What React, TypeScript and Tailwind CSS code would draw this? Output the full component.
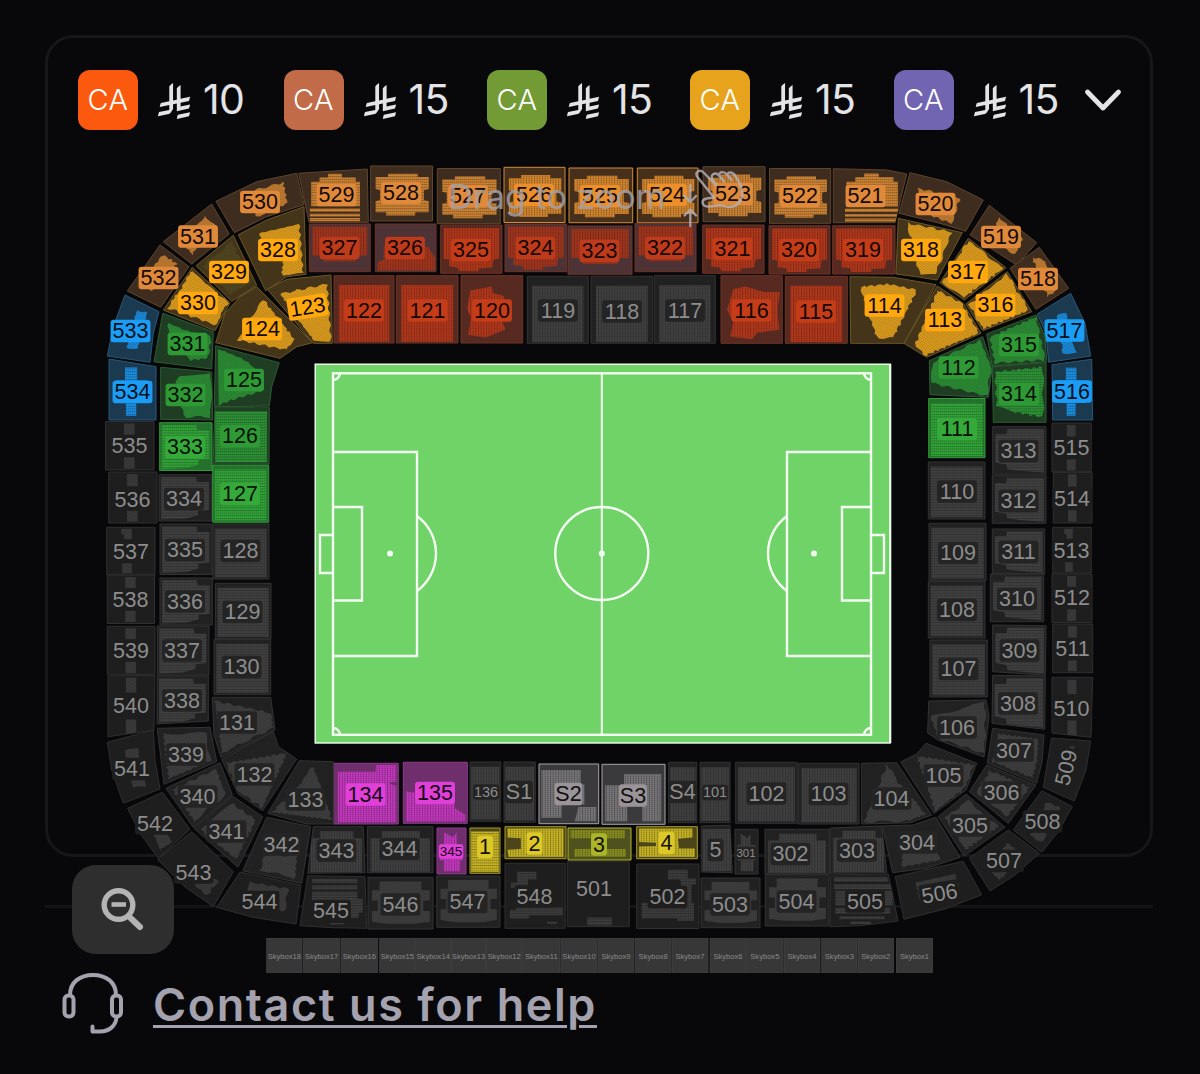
import React from "react";
import clsx from "clsx";

type Kind =
  | "orange"
  | "orangeLit"
  | "gold"
  | "goldDim"
  | "red"
  | "redDim"
  | "green"
  | "greenLit"
  | "blue"
  | "grey"
  | "greyDark"
  | "magenta"
  | "silver"
  | "yellow"
  | "olive";

type Section = {
  id: string;
  at: [number, number];
  kind: Kind;
  // four numbers are a box (x1, y1, x2, y2), more are a polygon
  shape: number[];
  // name of a preset or a polygon of its own
  seats?: string | number[];
  rows?: "v" | "h" | "d";
  size?: number;
  rotate?: number;
};

const KINDS: Record<Kind, { area: string; seats: string; tag: string; text: string }> = {
  orange: { area: "fill-[#3e2c1e] stroke-[#5f452d]", seats: "fill-[#d08636]", tag: "fill-[#e0893a]", text: "fill-[#120b05]" },
  orangeLit: { area: "fill-[#46301c] stroke-[#d18a35]", seats: "fill-[#d98a30]", tag: "fill-[#ec8f2a]", text: "fill-[#120b05]" },
  gold: { area: "fill-[#43341a] stroke-[#6b5726]", seats: "fill-[#eda820]", tag: "fill-[#ffa80f]", text: "fill-[#120b05]" },
  goldDim: { area: "fill-[#43351a] stroke-[#6b5726]", seats: "fill-[#564b24]", tag: "fill-[#ffa80f]", text: "fill-[#120b05]" },
  red: { area: "fill-[#572a21] stroke-[#703324]", seats: "fill-[#b83a1d]", tag: "fill-[#c43c18]", text: "fill-[#150705]" },
  redDim: { area: "fill-[#4e3336] stroke-[#703324]", seats: "fill-[#a8381f]", tag: "fill-[#bd3a1b]", text: "fill-[#150705]" },
  green: { area: "fill-[#1f3d23] stroke-[#2d5a33]", seats: "fill-[#2f9638]", tag: "fill-[#2f9a35]", text: "fill-[#051206]" },
  greenLit: { area: "fill-[#25702c] stroke-[#2f9a38]", seats: "fill-[#34a83b]", tag: "fill-[#35a939]", text: "fill-[#051206]" },
  blue: { area: "fill-[#1b3a50] stroke-[#28577a]", seats: "fill-[#1d92e6]", tag: "fill-[#1b9df5]", text: "fill-[#04101a]" },
  grey: { area: "fill-[#212121] stroke-[#333333]", seats: "fill-[#434343]", tag: "fill-[#242424]", text: "fill-[#8d8d8d]" },
  greyDark: { area: "fill-[#1e1e1e] stroke-[#2f2f2f]", seats: "fill-[#3f3f3f]", tag: "fill-[#1e1e1e]", text: "fill-[#8d8d8d]" },
  magenta: { area: "fill-[#6e2f6c] stroke-[#8c3b8a]", seats: "fill-[#c93bc3]", tag: "fill-[#e03fd8]", text: "fill-[#140413]" },
  silver: { area: "fill-[#3a393b] stroke-[#a6a4a6]", seats: "fill-[#7b797b]", tag: "fill-[#9a9498]", text: "fill-[#101010]" },
  yellow: { area: "fill-[#4c451b] stroke-[#a99a26]", seats: "fill-[#cbb926]", tag: "fill-[#dcc829]", text: "fill-[#141204]" },
  olive: { area: "fill-[#4e521e] stroke-[#b5b62a]", seats: "fill-[#8d9122]", tag: "fill-[#aab528]", text: "fill-[#141204]" },
};

// Seat blocks in the unit square, stretched over the section's box
const PRESETS: Record<string, number[][]> = {
  full: [[0.04, 0.08, 0.96, 0.08, 0.96, 0.97, 0.04, 0.97]],
  inner: [[0.08, 0.14, 0.92, 0.14, 0.92, 0.98, 0.08, 0.98]],
  barrel: [[0.08, 0.2, 0.28, 0.2, 0.28, 0.14, 0.76, 0.14, 0.76, 0.2, 0.94, 0.2, 0.94, 0.42, 0.86, 0.44, 0.86, 0.62, 0.94, 0.64, 0.94, 0.84, 0.72, 0.84, 0.72, 0.9, 0.25, 0.9, 0.25, 0.84, 0.08, 0.84, 0.08, 0.64, 0.15, 0.62, 0.15, 0.44, 0.08, 0.42]],
  steps: [
    [0.42, 0.09, 0.62, 0.09, 0.62, 0.16, 0.82, 0.16, 0.82, 0.24, 0.88, 0.24, 0.88, 0.7, 0.18, 0.7, 0.18, 0.24, 0.3, 0.24, 0.3, 0.16, 0.42, 0.16],
    [0.16, 0.74, 0.88, 0.74, 0.88, 0.8, 0.16, 0.8],
    [0.16, 0.84, 0.88, 0.84, 0.88, 0.89, 0.16, 0.89],
    [0.16, 0.92, 0.88, 0.92, 0.88, 0.98, 0.16, 0.98],
  ],
  bowl: [[0.05, 0.06, 0.95, 0.06, 0.95, 0.7, 0.86, 0.72, 0.84, 0.88, 0.62, 0.9, 0.62, 0.96, 0.3, 0.96, 0.28, 0.88, 0.14, 0.86, 0.14, 0.72, 0.05, 0.7]],
  top: [[0.05, 0.06, 0.95, 0.06, 0.95, 0.66, 0.8, 0.66, 0.76, 0.78, 0.24, 0.78, 0.2, 0.66, 0.05, 0.66]],
  base: [[0.14, 0.45, 0.6, 0.5, 0.7, 0.42, 0.88, 0.5, 0.98, 0.7, 0.98, 0.97, 0.04, 0.97, 0.04, 0.8, 0.14, 0.75]],
  blob: [[0.2, 0.2, 0.4, 0.16, 0.7, 0.24, 0.96, 0.24, 0.92, 0.5, 0.95, 0.8, 0.6, 0.84, 0.5, 0.94, 0.15, 0.9, 0.2, 0.7, 0.1, 0.5]],
  blob2: [[0.15, 0.22, 0.5, 0.16, 0.52, 0.26, 0.7, 0.3, 0.66, 0.66, 0.72, 0.8, 0.4, 0.92, 0.12, 0.88, 0.16, 0.62, 0.1, 0.5]],
  left: [[0.04, 0.05, 0.7, 0.05, 0.72, 0.16, 0.95, 0.16, 0.95, 0.76, 0.74, 0.78, 0.74, 0.88, 0.5, 0.95, 0.04, 0.97]],
  right: [[0.96, 0.05, 0.28, 0.05, 0.26, 0.16, 0.05, 0.16, 0.05, 0.76, 0.26, 0.8, 0.28, 0.9, 0.5, 0.93, 0.96, 0.97]],
  bars: [[0.38, 0.04, 0.6, 0.04, 0.6, 0.28, 0.38, 0.28], [0.38, 0.72, 0.6, 0.72, 0.6, 0.97, 0.38, 0.97]],
  bars2: [[0.3, 0.03, 0.52, 0.03, 0.52, 0.25, 0.36, 0.25, 0.36, 0.15, 0.3, 0.15], [0.32, 0.76, 0.52, 0.76, 0.52, 0.97, 0.32, 0.97]],
  plus: [[0.34, 0.14, 0.6, 0.14, 0.6, 0.35, 0.82, 0.35, 0.82, 0.72, 0.58, 0.72, 0.58, 0.93, 0.36, 0.93, 0.36, 0.72, 0.14, 0.72, 0.14, 0.35, 0.34, 0.35]],
  fringe: [[0.22, 0.1, 0.8, 0.1, 0.8, 0.25, 0.95, 0.25, 0.95, 0.98, 0.05, 0.98, 0.05, 0.25, 0.22, 0.25]],
  slats: [
    [0.06, 0.06, 0.85, 0.06, 0.85, 0.15, 0.06, 0.15],
    [0.06, 0.19, 0.9, 0.19, 0.9, 0.29, 0.06, 0.29],
    [0.08, 0.32, 0.92, 0.32, 0.92, 0.6, 0.08, 0.6],
    [0.08, 0.64, 0.88, 0.64, 0.88, 0.76, 0.08, 0.76],
    [0.14, 0.8, 0.8, 0.8, 0.8, 0.86, 0.14, 0.86],
    [0.3, 0.9, 0.6, 0.9, 0.6, 0.95, 0.3, 0.95],
  ],
  pillow: [[0.18, 0.08, 0.82, 0.08, 0.82, 0.25, 0.95, 0.25, 0.95, 0.45, 0.85, 0.45, 0.85, 0.65, 0.95, 0.65, 0.95, 0.86, 0.72, 0.9, 0.3, 0.9, 0.06, 0.86, 0.06, 0.65, 0.15, 0.65, 0.15, 0.45, 0.06, 0.45, 0.06, 0.25, 0.18, 0.25]],
  stair: [[0.2, 0.13, 0.52, 0.13, 0.52, 0.25, 0.38, 0.25, 0.38, 0.38, 0.1, 0.38, 0.1, 0.3, 0.2, 0.3], [0.18, 0.58, 0.8, 0.58, 0.8, 0.68, 0.96, 0.68, 0.96, 0.8, 0.4, 0.8, 0.4, 0.85, 0.08, 0.85, 0.08, 0.72, 0.18, 0.72], [0.7, 0.9, 0.86, 0.9, 0.86, 0.93, 0.7, 0.93]],
  stairR: [[0.5, 0.09, 0.82, 0.09, 0.82, 0.22, 0.95, 0.22, 0.95, 0.32, 0.88, 0.32, 0.88, 0.6, 0.76, 0.6, 0.7, 0.24, 0.5, 0.24], [0.08, 0.6, 0.92, 0.6, 0.92, 0.88, 0.65, 0.88, 0.65, 0.84, 0.08, 0.84]],
  foot: [[0.32, 0.86, 0.72, 0.86, 0.72, 0.98, 0.32, 0.98]],
  ladder: [
    [0.18, 0.06, 0.86, 0.06, 0.86, 0.14, 0.18, 0.14],
    [0.18, 0.18, 0.86, 0.18, 0.86, 0.26, 0.18, 0.26],
    [0.18, 0.3, 0.86, 0.3, 0.86, 0.44, 0.94, 0.44, 0.94, 0.7, 0.88, 0.7, 0.88, 0.8, 0.7, 0.8, 0.7, 0.48, 0.18, 0.48],
    [0.45, 0.9, 0.66, 0.9, 0.66, 0.93, 0.45, 0.93],
  ],
  cross: [[0.25, 0.1, 0.55, 0.2, 0.68, 0.1, 0.68, 0.35, 0.9, 0.35, 0.9, 0.7, 0.8, 0.7, 0.8, 0.94, 0.25, 0.94, 0.25, 0.7, 0.1, 0.7, 0.1, 0.35, 0.25, 0.35]],
  bites: [[0.04, 0.06, 0.96, 0.06, 0.96, 0.95, 0.06, 0.95, 0.04, 0.72, 0.26, 0.7, 0.26, 0.36, 0.04, 0.34]],
  bites2: [[0.04, 0.06, 0.92, 0.06, 0.92, 0.34, 0.68, 0.38, 0.7, 0.68, 0.96, 0.68, 0.96, 0.95, 0.04, 0.95, 0.04, 0.62, 0.32, 0.6, 0.32, 0.5, 0.04, 0.48]],
  band: [[0.04, 0.06, 0.9, 0.06, 0.9, 0.32, 0.04, 0.32], [0.1, 0.66, 0.92, 0.66, 0.92, 0.9, 0.1, 0.9]],
  s2: [[0.04, 0.1, 0.7, 0.1, 0.7, 0.34, 0.76, 0.34, 0.76, 0.68, 0.38, 0.68, 0.38, 0.9, 0.04, 0.9], [0.66, 0.72, 0.96, 0.72, 0.96, 0.96, 0.6, 0.96]],
  s3: [[0.35, 0.16, 0.94, 0.16, 0.94, 0.95, 0.64, 0.95, 0.64, 0.7, 0.4, 0.7, 0.4, 0.95, 0.05, 0.95, 0.05, 0.35, 0.35, 0.35]],
  m134: [[0.07, 0.14, 0.65, 0.14, 0.66, 0.03, 0.97, 0.03, 0.97, 0.3, 0.85, 0.32, 0.97, 0.38, 0.97, 0.97, 0.07, 0.97]],
  m135: [[0.04, 0.48, 0.2, 0.5, 0.8, 0.5, 0.8, 0.75, 0.97, 0.86, 0.97, 0.97, 0.04, 0.97]],
};

const SECTIONS: Section[] = [
  // upper ring, top
  { id: "530", at: [260, 202], kind: "orange", shape: [216, 201.3, 256.7, 181.7, 296.7, 173.3, 304, 204.7, 266.7, 216.7, 234.3, 232.7], seats: [247, 193, 283, 182, 287, 203, 257, 217] },
  { id: "529", at: [336.5, 195], kind: "orange", shape: [298.7, 173.3, 367.3, 169, 368.3, 222.3, 309, 222.3], seats: "steps", rows: "h" },
  { id: "528", at: [401, 193], kind: "orange", shape: [370.7, 166, 432.5, 221], seats: "barrel", rows: "h" },
  { id: "527", at: [468, 196], kind: "orange", shape: [437.3, 168.5, 500.3, 223.7], seats: "barrel", rows: "h" },
  { id: "526", at: [534, 195], kind: "orangeLit", shape: [504, 167.3, 565, 222.5], seats: "barrel", rows: "v" },
  { id: "525", at: [600, 196], kind: "orangeLit", shape: [569, 168, 632.7, 222.7], seats: "barrel", rows: "v" },
  { id: "524", at: [667, 195], kind: "orangeLit", shape: [637.3, 168, 698, 222.7], seats: "barrel", rows: "v" },
  { id: "523", at: [733, 194], kind: "orange", shape: [703, 166.7, 765, 221.7], seats: "barrel", rows: "v" },
  { id: "522", at: [800, 196], kind: "orange", shape: [769.5, 168.5, 830.7, 223.3], seats: "barrel", rows: "h" },
  { id: "521", at: [865.5, 196], kind: "orange", shape: [833.3, 168.7, 886.7, 170, 906.7, 174, 895, 222.7, 833.3, 222.7], seats: "steps", rows: "h" },
  { id: "520", at: [935.5, 204], kind: "orange", shape: [910, 172.7, 946.7, 181.7, 983.3, 200, 965.7, 231.3, 940, 223.3, 899, 213.3], seats: [917, 188, 960, 198, 952, 223, 923, 213] },
  { id: "519", at: [1001, 237], kind: "orange", shape: [989.3, 205.3, 1036.7, 242.7, 1016.7, 265, 970, 235], seats: [998, 218, 1023, 238, 1015, 255, 993, 242] },
  { id: "518", at: [1038, 279], kind: "orange", shape: [1039.3, 247.3, 1068.7, 288.3, 1036, 309.3, 1010, 268.3], seats: [1032, 257, 1043, 260, 1057, 290, 1048, 297] },
  { id: "517", at: [1064.5, 330.5], kind: "blue", shape: [1070.7, 293.3, 1085, 323.3, 1090.7, 356, 1048.7, 362.3, 1046, 333.3, 1037.3, 314], seats: [1056, 317, 1065, 312, 1076, 353, 1063, 353] },
  { id: "516", at: [1072, 391.5], kind: "blue", shape: [1052, 364.7, 1091.7, 359.3, 1092.7, 420, 1052.7, 420], seats: "plus", rows: "h" },
  // upper ring, right side
  { id: "515", at: [1071.5, 448], kind: "greyDark", shape: [1052, 423, 1091.3, 472], seats: "bars" },
  { id: "514", at: [1072, 499], kind: "greyDark", shape: [1053.3, 472.3, 1092, 523], seats: "bars" },
  { id: "513", at: [1071.5, 551], kind: "greyDark", shape: [1052.7, 527.3, 1091.3, 573], seats: "bars2" },
  { id: "512", at: [1072, 598], kind: "greyDark", shape: [1052, 574, 1092, 622.5], seats: "bars" },
  { id: "511", at: [1072.5, 649], kind: "greyDark", shape: [1052.7, 624, 1092.7, 672.7], seats: "bars" },
  { id: "510", at: [1071.5, 708.5], kind: "greyDark", shape: [1052, 677.3, 1092.7, 677.3, 1091, 737.3, 1052, 733], seats: "bars" },
  { id: "509", at: [1066, 767.5], kind: "greyDark", shape: [1051.5, 738, 1090.7, 741, 1086, 770, 1074.3, 801, 1043.3, 787.3], seats: [1064, 748, 1076, 746, 1070, 780, 1060, 778], rotate: -76 },
  { id: "508", at: [1042.5, 821.5], kind: "greyDark", shape: [1041.7, 790.7, 1072.3, 806.7, 1058, 832, 1041.7, 852.3, 1013.3, 830], seats: [1047, 802, 1060, 808, 1042, 842, 1030, 836] },
  { id: "507", at: [1004, 861], kind: "greyDark", shape: [1008.3, 830, 1039.3, 853.3, 1015, 875, 990, 891, 969.3, 858.3], seats: [1008, 842, 1022, 855, 1000, 880, 988, 868] },
  { id: "506", at: [939.5, 893.5], kind: "greyDark", shape: [963.3, 861.3, 981.7, 894.7, 945, 909, 904, 919.3, 895.3, 876.7], seats: [916, 883, 955, 873, 960, 890, 920, 900], rotate: -10 },
  // upper ring, bottom
  { id: "505", at: [865, 901.5], kind: "greyDark", shape: [830.7, 875, 888.3, 874, 898, 921, 860, 925.7, 830, 926.7], seats: "slats", rows: "h" },
  { id: "504", at: [796.5, 901.5], kind: "grey", shape: [765.3, 874.3, 829, 926], seats: "pillow" },
  { id: "503", at: [730, 904.5], kind: "grey", shape: [701, 878, 760, 927.7], seats: "pillow" },
  { id: "502", at: [667.5, 897], kind: "greyDark", shape: [636.7, 864, 699, 928.5], seats: "stairR", rows: "h" },
  { id: "501", at: [594, 888.5], kind: "greyDark", shape: [567.3, 861.7, 629.3, 926.7], seats: "foot", rows: "h" },
  { id: "548", at: [534.5, 896.5], kind: "greyDark", shape: [505, 863.3, 565.3, 928.3], seats: "stair", rows: "h" },
  { id: "547", at: [467.5, 902], kind: "grey", shape: [436.7, 876, 500, 927.3], seats: "pillow" },
  { id: "546", at: [400.5, 904.5], kind: "grey", shape: [368, 877.3, 433, 929], seats: "pillow" },
  { id: "545", at: [331, 911], kind: "greyDark", shape: [307.7, 875.7, 365, 876.7, 366.7, 928.3, 333, 927.7, 300, 925.7], seats: "ladder", rows: "h" },
  { id: "544", at: [259.5, 902], kind: "greyDark", shape: [240, 872, 301, 885, 296, 924, 253, 917.3, 216.7, 907.3], seats: [250, 882, 288, 889, 285, 911, 270, 908, 248, 892] },
  { id: "543", at: [193.5, 872.5], kind: "greyDark", shape: [191.7, 831.7, 233.3, 871.7, 213.3, 906.7, 183.3, 885.7, 157.3, 859.3], seats: [188, 862, 218, 882, 206, 896, 195, 884] },
  { id: "542", at: [155, 823.5], kind: "greyDark", shape: [162.3, 792.3, 190, 829.3, 158.3, 858.3, 140, 833.3, 127.7, 808.3], seats: [146, 812, 158, 812, 172, 842, 160, 850] },
  { id: "541", at: [132, 769], kind: "greyDark", shape: [153.3, 730, 155, 760, 160, 789, 123.3, 803.3, 111.7, 770, 107.3, 742.3], seats: [125, 750, 138, 748, 147, 785, 134, 788] },
  // upper ring, left side
  { id: "540", at: [131, 705.5], kind: "greyDark", shape: [108, 676, 155, 675.3, 154, 730, 108, 736.7], seats: "bars" },
  { id: "539", at: [131, 650.5], kind: "greyDark", shape: [107.3, 626.3, 155, 674.7], seats: "bars" },
  { id: "538", at: [130.5, 599.5], kind: "greyDark", shape: [107.3, 575, 154.5, 623.5], seats: "bars" },
  { id: "537", at: [131, 551.5], kind: "greyDark", shape: [106.7, 527.3, 155, 574.7], seats: "bars2" },
  { id: "536", at: [132.5, 499.5], kind: "greyDark", shape: [108.7, 472, 157, 523], seats: "bars" },
  { id: "535", at: [129.5, 446], kind: "greyDark", shape: [105.5, 421.5, 154, 470], seats: "bars" },
  { id: "534", at: [132.5, 392], kind: "blue", shape: [109, 359, 156, 366.7, 156, 420, 109, 420], seats: "plus", rows: "h" },
  { id: "533", at: [130.5, 331], kind: "blue", shape: [125, 295, 159, 311.7, 153.3, 333.3, 150, 362.3, 107.3, 356, 113.3, 326.7], seats: [137, 310, 147, 313, 137, 350, 127, 347] },
  { id: "532", at: [158.5, 278], kind: "orange", shape: [160, 245, 189, 266.7, 160.7, 307.3, 127.3, 291], seats: [163, 255, 177, 264, 151, 292, 141, 282] },
  { id: "531", at: [198, 236.5], kind: "orange", shape: [211.7, 204, 229.3, 234, 191.7, 264, 163.3, 241.7], seats: [205, 217, 217, 226, 192, 254, 181, 240] },

  // middle ring
  { id: "327", at: [339.5, 248], kind: "redDim", shape: [309.3, 224, 370.3, 271.7], seats: "top", rows: "v" },
  { id: "326", at: [405, 248], kind: "redDim", shape: [375.3, 224, 436, 271.7], seats: "base", rows: "v" },
  { id: "325", at: [471, 250], kind: "red", shape: [440.7, 225, 502, 273.3], seats: "bowl", rows: "v" },
  { id: "324", at: [535.5, 248], kind: "redDim", shape: [505, 224, 566.7, 271.7], seats: "bowl", rows: "v" },
  { id: "323", at: [599.5, 251], kind: "redDim", shape: [568, 226, 632, 274.3], seats: "top", rows: "v" },
  { id: "322", at: [665, 248], kind: "redDim", shape: [635, 223.3, 696, 271.7], seats: "top", rows: "v" },
  { id: "321", at: [732.5, 249], kind: "red", shape: [702.7, 225, 764, 273.3], seats: "bowl", rows: "v" },
  { id: "320", at: [799, 250], kind: "red", shape: [769, 225.7, 830, 274], seats: "bowl", rows: "v" },
  { id: "319", at: [863, 250], kind: "red", shape: [832.7, 225.7, 895, 274], seats: "bowl", rows: "v" },
  { id: "318", at: [921, 250], kind: "gold", shape: [898.3, 218.3, 962.3, 232.7, 937, 280, 916.7, 276.7, 896, 274], seats: [907, 223, 952, 232, 935, 275, 920, 275] },
  { id: "317", at: [968, 272], kind: "gold", shape: [968.3, 238.3, 1006, 267.7, 964.3, 300, 940, 282.7], seats: [968, 241, 1004, 268, 963, 298, 943, 282] },
  { id: "316", at: [995.5, 305], kind: "gold", shape: [1007.3, 271.7, 1031.7, 311.7, 982.7, 330.7, 966, 304], seats: [1007, 274, 1029, 310, 983, 329, 969, 305] },
  { id: "315", at: [1019, 345], kind: "green", shape: [986.7, 334, 1036, 315, 1045, 336.7, 1046.7, 361.7, 992.3, 366], seats: [990, 337, 1036, 317, 1045, 360, 995, 363] },
  { id: "314", at: [1019, 394], kind: "green", shape: [992.3, 366.7, 1046, 362.7, 1046, 422.3, 993.3, 422.3], seats: [995, 372, 1043, 367, 1043, 417, 1013, 412, 997, 407], rows: "h" },
  { id: "313", at: [1018.5, 451], kind: "grey", shape: [992.7, 426.7, 1046, 474], seats: "right", rows: "h" },
  { id: "312", at: [1018.5, 501], kind: "grey", shape: [992.3, 475.3, 1046, 523.3], seats: "right", rows: "h" },
  { id: "311", at: [1018.5, 552], kind: "grey", shape: [992.3, 529, 1044.7, 574], seats: "right", rows: "h" },
  { id: "310", at: [1017, 599], kind: "grey", shape: [990.3, 574, 1043.7, 621.7], seats: "right", rows: "h" },
  { id: "309", at: [1019.5, 650.5], kind: "grey", shape: [992.7, 625, 1046, 625.7, 1045.3, 675, 992.7, 671.7], seats: "right", rows: "h" },
  { id: "308", at: [1018, 703.5], kind: "grey", shape: [992.7, 675.3, 1045.3, 676, 1044.7, 729.3, 992, 723.3], seats: "right", rows: "h" },
  { id: "307", at: [1014, 750.5], kind: "grey", shape: [992.7, 728.3, 1044, 735, 1042, 762, 1036.7, 783.3, 987.3, 763.3] },
  { id: "306", at: [1001.5, 792.5], kind: "grey", shape: [969.3, 791.7, 986.7, 765, 1036, 785, 1008.3, 823.3] },
  { id: "305", at: [970, 825.5], kind: "grey", shape: [938.3, 816.7, 966, 794, 1005, 827.3, 964, 856] },
  { id: "304", at: [917, 842.5], kind: "grey", shape: [882.3, 826, 913.3, 825, 936, 817.3, 960, 857.3, 926.7, 868.3, 892.7, 872.7], seats: [903, 838, 932, 832, 940, 860, 902, 867] },
  { id: "303", at: [857, 850.5], kind: "grey", shape: [830, 828, 881.7, 826, 886.7, 872.7, 830, 873.3], seats: "fringe", rows: "v" },
  { id: "302", at: [790.5, 854], kind: "grey", shape: [765, 829.3, 829.3, 874], seats: "fringe", rows: "v" },
  { id: "301", at: [746, 853], kind: "grey", shape: [735, 829.3, 758, 874], seats: "cross", rows: "v", size: 11.5 },
  { id: "5", at: [715.5, 850], kind: "grey", shape: [701.3, 826, 730, 825.3, 732.3, 872.7, 701.3, 872], seats: "full", rows: "v" },
  { id: "4", at: [666.5, 843], kind: "yellow", shape: [636.7, 826.7, 697.3, 858.7], seats: "bites2", rows: "v" },
  { id: "3", at: [599, 844.5], kind: "olive", shape: [568, 828, 631, 860], seats: "band", rows: "v" },
  { id: "2", at: [534.5, 843.5], kind: "yellow", shape: [505, 826.7, 566, 858.7], seats: "bites", rows: "v" },
  { id: "1", at: [485, 847], kind: "yellow", shape: [470, 828, 500, 873.3], seats: "full", rows: "h" },
  { id: "345", at: [451, 851.5], kind: "magenta", shape: [437, 828, 466, 874], seats: "cross", rows: "v", size: 13.5 },
  { id: "344", at: [399.5, 849], kind: "grey", shape: [367.3, 826.7, 433, 872.7], seats: "fringe", rows: "v" },
  { id: "343", at: [336.5, 850.5], kind: "grey", shape: [313.3, 826.7, 363.3, 826.7, 365, 872.7, 307.7, 873.3], seats: "fringe", rows: "v" },
  { id: "342", at: [281.5, 844.5], kind: "grey", shape: [266.7, 817.3, 310.7, 826.7, 301.7, 883.3, 242.7, 870.7], seats: [265, 855, 297, 856, 295, 878, 260, 870] },
  { id: "341", at: [226.5, 831.5], kind: "grey", shape: [232.3, 796, 262.7, 816.7, 238, 867.3, 194, 828.3] },
  { id: "340", at: [197.5, 796.5], kind: "grey", shape: [220, 762.7, 232.3, 794.7, 193.3, 827.3, 166, 788.3] },
  { id: "339", at: [186, 754.5], kind: "grey", shape: [157.3, 728.3, 210, 727.3, 216.7, 761.7, 164, 784.3] },
  { id: "338", at: [182, 700.5], kind: "grey", shape: [157.3, 676, 208.3, 676, 208.3, 721, 157, 724], seats: "left", rows: "h" },
  { id: "337", at: [182, 650.5], kind: "grey", shape: [157.3, 626, 209, 675], seats: "left", rows: "h" },
  { id: "336", at: [185, 601.5], kind: "grey", shape: [160, 578, 212.3, 625], seats: "left", rows: "h" },
  { id: "335", at: [185, 550], kind: "grey", shape: [160, 524, 212, 574.5], seats: "left", rows: "h" },
  { id: "334", at: [184, 499], kind: "grey", shape: [159, 474.7, 211.7, 521], seats: "left", rows: "h" },
  { id: "333", at: [185, 447], kind: "greenLit", shape: [159.7, 422.7, 212, 470.5], seats: "left", rows: "h" },
  { id: "332", at: [185.5, 395], kind: "green", shape: [160.7, 367.3, 211.7, 372, 212.7, 420, 160.7, 419.3], seats: [180, 375, 211, 374, 211, 417, 185, 417, 180, 402, 168, 398] },
  { id: "331", at: [187.5, 344], kind: "green", shape: [162.7, 313.3, 213.3, 331.7, 211.7, 369, 154, 361.7], seats: [168, 324, 211, 337, 208, 358, 190, 360, 185, 352, 170, 352] },
  { id: "330", at: [198, 303], kind: "gold", shape: [192.3, 267.3, 230, 302.7, 215, 330.7, 163.3, 310], seats: [192, 271, 228, 303, 215, 325, 168, 308] },
  { id: "329", at: [229, 272], kind: "goldDim", shape: [233.3, 235.3, 256.7, 285.3, 231.7, 301.3, 196, 265.7] },
  { id: "328", at: [278, 250], kind: "gold", shape: [238.3, 234.7, 266.7, 220, 304, 206.7, 306, 274.3, 286.7, 276.7, 265.7, 290.7], seats: [260, 233, 299, 223, 303, 272, 282, 277, 283, 260, 262, 255] },

  // lower ring
  { id: "122", at: [364, 310.5], kind: "red", shape: [334, 275.7, 394, 343], seats: "inner", rows: "v" },
  { id: "121", at: [427.5, 310.5], kind: "red", shape: [396.3, 275.7, 458, 343], seats: "inner", rows: "v" },
  { id: "120", at: [492, 310.5], kind: "red", shape: [461, 275.7, 522.7, 343], seats: "blob2", rows: "v" },
  { id: "119", at: [558, 310.5], kind: "grey", shape: [527.3, 276.3, 588.3, 343.3], seats: "inner", rows: "v" },
  { id: "118", at: [622, 311.5], kind: "grey", shape: [591, 276.3, 652.7, 343.3], seats: "inner", rows: "v" },
  { id: "117", at: [685, 310.5], kind: "grey", shape: [654.3, 275.7, 715.3, 343.3], seats: "inner", rows: "v" },
  { id: "116", at: [751.5, 310.5], kind: "red", shape: [721, 275.7, 782.3, 343.3], seats: "blob", rows: "v" },
  { id: "115", at: [816, 311.5], kind: "red", shape: [785.3, 276.3, 847.3, 343.3], seats: "inner", rows: "v" },
  { id: "114", at: [884.5, 305.5], kind: "gold", shape: [850, 276.7, 893.3, 277.3, 936, 284.7, 904, 343.3, 850.7, 343.3], seats: [860, 287, 888, 284, 917, 290, 893, 338, 877, 338] },
  { id: "113", at: [945, 320], kind: "gold", shape: [937.3, 286, 963.3, 303.3, 981, 333.3, 926.7, 357.3, 904, 343.3], seats: [938, 290, 962, 304, 979, 333, 924, 356, 915, 345] },
  { id: "112", at: [958.5, 367.5], kind: "green", shape: [982.7, 336.7, 992.3, 366.7, 988.3, 397.3, 930, 394.7, 929.3, 360.7], seats: [980, 340, 991, 367, 987, 396, 932, 383, 932, 363] },
  { id: "111", at: [957, 429], kind: "greenLit", shape: [928.7, 398.5, 985, 457.7], seats: "full", rows: "h" },
  { id: "110", at: [957, 491.5], kind: "grey", shape: [928.3, 462, 985, 519], seats: "full", rows: "h" },
  { id: "109", at: [958, 553], kind: "grey", shape: [929, 523.3, 986, 580.3], seats: "full", rows: "h" },
  { id: "108", at: [957, 610], kind: "grey", shape: [928.3, 581.3, 985, 638], seats: "full", rows: "h" },
  { id: "107", at: [958.5, 669], kind: "grey", shape: [930, 640, 987.3, 697], seats: "full", rows: "h" },
  { id: "106", at: [957, 727.5], kind: "grey", shape: [928.7, 701, 986, 700, 989, 716, 984, 757, 938, 740, 927.7, 733], seats: [931, 717, 985, 702, 985, 754, 938, 738] },
  { id: "105", at: [943.5, 775.5], kind: "grey", shape: [926, 743.3, 976.7, 763.3, 966, 790, 934, 813.3, 900.7, 762, 916.7, 754], seats: [917, 756, 974, 765, 964, 789, 935, 811] },
  { id: "104", at: [891.5, 798.5], kind: "grey", shape: [861.7, 763.3, 896.7, 762.7, 931.7, 815, 910, 822.7, 861.7, 824], seats: [887, 764, 900, 785, 926, 814, 908, 821, 864, 822] },
  { id: "103", at: [828.5, 794], kind: "grey", shape: [798.7, 763.3, 859, 824], seats: "full", rows: "v" },
  { id: "102", at: [766.5, 793.5], kind: "grey", shape: [735.7, 762.3, 797.3, 823.3], seats: "full", rows: "v" },
  { id: "101", at: [715, 792.5], kind: "grey", shape: [700, 762.3, 730, 822.7], seats: "full", rows: "v", size: 14.5 },
  { id: "S4", at: [682.5, 792], kind: "grey", shape: [668.7, 762.3, 696.7, 822.7], seats: "full", rows: "v" },
  { id: "S3", at: [633, 795.5], kind: "silver", shape: [602, 764.3, 665, 824.3], seats: "s3", rows: "v" },
  { id: "S2", at: [568.5, 794], kind: "silver", shape: [539, 764, 598.7, 823.7], seats: "s2", rows: "v" },
  { id: "S1", at: [519, 792], kind: "grey", shape: [504, 762, 535.3, 822.3], seats: "full", rows: "v" },
  { id: "136", at: [486, 792], kind: "grey", shape: [470, 762, 500.7, 821.3], seats: "full", rows: "v", size: 14.5 },
  { id: "135", at: [435, 793], kind: "magenta", shape: [403.3, 762.3, 467.3, 823.3], seats: "m135", rows: "v" },
  { id: "134", at: [365.5, 794.5], kind: "magenta", shape: [333.3, 763.3, 398.3, 824], seats: "m134", rows: "v" },
  { id: "133", at: [305.5, 799.5], kind: "grey", shape: [299.3, 760.7, 333.3, 761.7, 333.3, 824, 306.7, 824, 267.7, 813.3], seats: [312, 764, 320, 785, 332, 820, 272, 812, 300, 785] },
  { id: "132", at: [254.5, 774.5], kind: "grey", shape: [273.3, 731.7, 278.3, 746.7, 296.7, 759, 262.7, 810.7, 238.3, 794, 221.7, 759.3], seats: [287, 753, 262, 808, 238, 791, 226, 763] },
  { id: "131", at: [237, 722.5], kind: "grey", shape: [212.3, 697.3, 270.7, 697.3, 275, 730, 221, 757.7, 214, 735], seats: [215, 701, 271, 713, 273, 728, 222, 753] },
  { id: "130", at: [241.5, 667], kind: "grey", shape: [214, 639.3, 270.7, 694.7], seats: "full", rows: "h" },
  { id: "129", at: [242.5, 612], kind: "grey", shape: [215.3, 583.3, 271, 638.7], seats: "full", rows: "h" },
  { id: "128", at: [240.5, 551], kind: "grey", shape: [213, 524, 269, 579], seats: "full", rows: "h" },
  { id: "127", at: [240, 494], kind: "greenLit", shape: [212.7, 465, 268.7, 522.3], seats: "full", rows: "h" },
  { id: "126", at: [240, 436], kind: "green", shape: [215, 406.7, 269.3, 407.3, 269, 464, 213, 464], seats: "full", rows: "h" },
  { id: "125", at: [244, 380], kind: "green", shape: [215.7, 345.7, 279.3, 362.7, 271.7, 386.7, 269.3, 406, 214.3, 406.7], seats: [217, 350, 243, 358, 263, 377, 263, 390, 218, 405] },
  { id: "124", at: [262, 329], kind: "gold", shape: [256.7, 286.7, 312.7, 342.7, 296.7, 346.7, 280, 358.3, 215.7, 342.7, 225, 313.3, 240, 296.7], seats: [263, 299, 295, 340, 287, 350, 238, 340] },
  { id: "123", at: [307.5, 307], kind: "gold", shape: [267.3, 289.3, 286.7, 279.3, 331, 275, 332.3, 343.3, 313.3, 343.3], seats: [280, 294, 327, 284, 331, 341, 314, 341], rotate: -9 },
];

const SKYBOXES: [number, number][] = [
  [896.5, 932.5], [858, 893.5], [821.7, 857], [784, 820], [746.7, 783], [710, 746], [672, 708], [635.3, 671], [598, 634],
  [561, 597], [522.7, 560], [486.3, 522], [451, 486], [415.7, 450.7], [379.7, 415], [341, 377.7], [303.5, 339.5], [266.7, 302],
];

const LEGEND = [
  { price: 10, color: "bg-[#fb5a0e]", width: "w-[205.5px]" },
  { price: 15, color: "bg-[#c16b49]", width: "w-[203.5px]" },
  { price: 15, color: "bg-[#739b35]", width: "w-[203px]" },
  { price: 15, color: "bg-[#e8a31d]", width: "w-[203.5px]" },
  { price: 15, color: "bg-[#7164b1]", width: "w-[168px]" },
];

const toPoints = (s: number[]) => (s.length === 4 ? [s[0], s[1], s[2], s[1], s[2], s[3], s[0], s[3]] : s);

const box = (p: number[]) => {
  const xs = p.filter((_, i) => i % 2 === 0);
  const ys = p.filter((_, i) => i % 2 === 1);
  return { x: Math.min(...xs), y: Math.min(...ys), w: Math.max(...xs) - Math.min(...xs), h: Math.max(...ys) - Math.min(...ys) };
};

// Breaks the straight edges of a seat block into uneven steps
const roughen = (p: number[], amount = 1.1) => {
  const out: number[] = [];
  const n = p.length / 2;
  for (let i = 0; i < n; i++) {
    const [ax, ay] = [p[i * 2], p[i * 2 + 1]];
    const [bx, by] = [p[((i + 1) % n) * 2], p[((i + 1) % n) * 2 + 1]];
    const steps = Math.max(1, Math.round(Math.hypot(bx - ax, by - ay) / 2.5));
    for (let k = 0; k < steps; k++) {
      const x = ax + ((bx - ax) * k) / steps;
      const y = ay + ((by - ay) * k) / steps;
      out.push(x + Math.sin(x * 12.9 + y * 7.3) * amount, y + Math.cos(x * 5.1 + y * 9.7) * amount);
    }
  }
  return out;
};

const seatBlocks = (s: Section) => {
  const p = toPoints(s.shape);
  const b = box(p);
  if (Array.isArray(s.seats)) return [roughen(s.seats)];
  if (!s.seats) {
    const cx = b.x + b.w / 2;
    const cy = b.y + b.h / 2;
    return [roughen(p.map((v, i) => (i % 2 ? cy + (v - cy) * 0.8 : cx + (v - cx) * 0.8)))];
  }
  return PRESETS[s.seats].map((q) => q.map((v, i) => (i % 2 ? b.y + v * b.h : b.x + v * b.w)));
};

const ROWS = { v: "url(#rows-v)", h: "url(#rows-h)", d: "url(#rows-d)" };

const StandSection = ({ section }: { section: Section }) => {
  const k = KINDS[section.kind];
  const size = section.size ?? 21.5;
  const [x, y] = section.at;
  const tagW = section.id.length * size * 0.556 + (size > 20 ? 4 : 2);
  const tagH = size + 1;
  const outline = toPoints(section.shape).join(" ");
  return (
    <g>
      <clipPath id={`clip-${section.id}`}>
        <polygon points={outline} />
      </clipPath>
      <polygon points={outline} className={k.area} strokeWidth={1} />
      <g clipPath={`url(#clip-${section.id})`}>
        {seatBlocks(section).map((block, i) => (
          <g key={i}>
            <polygon points={block.join(" ")} className={k.seats} />
            <polygon points={block.join(" ")} fill={ROWS[section.rows ?? "d"]} />
          </g>
        ))}
      </g>
      <g transform={section.rotate ? `rotate(${section.rotate} ${x} ${y})` : undefined}>
        <rect x={x - tagW / 2} y={y - tagH / 2} width={tagW} height={tagH} rx={3} className={k.tag} />
        <text x={x} y={y + size * 0.34} fontSize={size} textAnchor="middle" className={k.text}>
          {section.id}
        </text>
      </g>
    </g>
  );
};

const Pitch = () => (
  <g fill="none" stroke="#f4fdf2" strokeWidth={2.4}>
    <rect x={315.2} y={364.2} width={575} height={378.8} fill="#6fd367" strokeWidth={1.4} />
    <path d="M890.3 364V743" strokeWidth={2} />
    <rect x={333} y={373.3} width={538} height={361.5} />
    <path d="M601.8 373V735" strokeWidth={2} />
    <circle cx={601.8} cy={553.5} r={46.5} />
    <path d="M333 452H417V656H333M333 507H362V600.5H333M333 535H320V573H333" />
    <path d="M871 452H787V656H871M871 507H842V600.5H871M871 535H884V573H871" />
    <path d="M417 516A46.5 46.5 0 0 1 417 591M787 516A46.5 46.5 0 0 0 787 591" />
    <path d="M333 380A7 7 0 0 0 340 373M864 373A7 7 0 0 0 871 380M333 728A7 7 0 0 1 340 735M864 735A7 7 0 0 1 871 728" />
    <g fill="#f4fdf2" stroke="none">
      <circle cx={601.8} cy={553.5} r={3} />
      <circle cx={390} cy={553.5} r={3} />
      <circle cx={814} cy={553.5} r={3} />
    </g>
  </g>
);

const DragHint = () => (
  <g opacity={0.82}>
    <text x={448.5} y={208.5} fontSize={34} textLength={217} lengthAdjust="spacing" className="fill-[#a5a1a8] font-['Inter',sans-serif]">
      Drag to zoom
    </text>
    <g fill="none" stroke="#b5b2b9" strokeWidth={2.4} strokeLinecap="round" strokeLinejoin="round">
      <path d="M690.3 185V201M684.5 196L690.3 202L696 196" />
      <path d="M690.3 226V210M684.5 215.500L690.3 209.500L696 215.500" />
      <path d="M714 197.500L697.800 177.500C694 172.500 699.500 168.500 703.500 172.500L716 185" />
      <path d="M715.500 183.500L712.500 179.500C709.500 174.500 715.500 171.500 719 175.500L724 181.500" />
      <path d="M719.500 176C718 172 723.500 170.500 727 174.500L731.500 180" />
      <path d="M727.500 175C727.500 171.500 732.500 171.500 735.500 176C740 183 744 191 741.500 198C738.500 206.500 730.500 208.500 724 206C718.500 204 714 206.500 708.500 206.500C701 206.500 701 199.500 706.500 198.500L714 197.500" />
    </g>
  </g>
);

const StadiumMap = () => (
  <svg
    className="absolute left-[100px] top-[160px] h-[820px] w-[1000px] font-['Liberation_Sans',Arial,sans-serif]"
    viewBox="100 160 1000 820"
  >
    <defs>
      <pattern id="rows-v" width={2.67} height={2} patternUnits="userSpaceOnUse">
        <rect width={1} height={2} fill="#000" opacity={0.26} />
        <rect width={2.67} height={0.6} fill="#000" opacity={0.12} />
      </pattern>
      <pattern id="rows-h" width={2} height={2.67} patternUnits="userSpaceOnUse">
        <rect width={2} height={1} fill="#000" opacity={0.26} />
        <rect width={0.6} height={2.67} fill="#000" opacity={0.12} />
      </pattern>
      <pattern id="rows-d" width={2} height={2} patternUnits="userSpaceOnUse" patternTransform="rotate(35)">
        <rect width={2} height={0.8} fill="#000" opacity={0.2} />
        <rect width={0.7} height={2} fill="#000" opacity={0.16} />
      </pattern>
    </defs>
    {SECTIONS.map((s) => (
      <StandSection key={s.id} section={s} />
    ))}
    <Pitch />
    {SKYBOXES.map(([x1, x2], i) => (
      <g key={i}>
        <rect x={x1} y={938.5} width={x2 - x1} height={34} className="fill-[#373737] stroke-[#424242]" strokeWidth={0.8} />
        <text x={(x1 + x2) / 2} y={i % 2 ? 959 : 958.5} fontSize={7.6} textAnchor="middle" className="fill-[#8a8a8a]">
          {`Skybox${i + 1}`}
        </text>
      </g>
    ))}
    <DragHint />
  </svg>
);

const RiyalIcon = () => (
  <svg viewBox="0 0 1124.14 1256.39" className="h-[36px] w-[32px] shrink-0" fill="currentColor">
    <path d="M699.62,1113.02c-20.06,44.48-33.32,92.75-38.4,143.37l424.51-90.24c20.06-44.47,33.31-92.75,38.4-143.37l-424.51,90.24Z" />
    <path d="M1085.73,895.8c20.06-44.47,33.32-92.75,38.4-143.37l-330.68,70.33v-135.2l292.27-62.11c20.06-44.47,33.32-92.75,38.4-143.37l-330.68,70.27V66.13c-50.67,28.45-95.67,66.32-132.25,110.99v403.35l-132.25,28.11V0c-50.67,28.44-95.67,66.32-132.25,110.99v525.69l-295.91,62.88c-20.06,44.47-33.33,92.75-38.42,143.37l334.33-71.05v170.26l-358.3,76.14c-20.06,44.47-33.32,92.75-38.4,143.37l375.04-79.7c30.53-6.35,56.77-24.4,73.83-49.24l68.78-101.97v-.02c7.14-10.55,11.3-23.27,11.3-36.97v-149.98l132.25-28.11v270.4l424.53-90.28Z" />
  </svg>
);

const Legend = () => (
  <div className="flex items-center pl-[30px] pt-8 text-[#e4e4e7]">
    {LEGEND.map((item, i) => (
      <div key={i} className={clsx("flex shrink-0 items-center", item.width)}>
        <div className={clsx("flex size-[60px] items-center justify-center rounded-xl text-[29px] font-light tracking-[0.3px] text-white", item.color)}>CA</div>
        <div className="ml-5 mt-0.5 flex">
          <RiyalIcon />
        </div>
        <span className="-mt-0.5 ml-[13px] text-[41px] leading-none tracking-[-0.6px]">{item.price}</span>
      </div>
    ))}
    <svg viewBox="0 0 40 24" className="ml-5 h-6 w-10" fill="none" stroke="currentColor" strokeWidth={4.8} strokeLinecap="round" strokeLinejoin="round">
      <path d="M5.500 4L21 20L36.500 4" />
    </svg>
  </div>
);

const ZoomOutButton = () => (
  <button className="relative ml-[27px] mt-2 flex h-[89px] w-[102px] items-center justify-center rounded-[24px] bg-[#2e2e2e]">
    <svg viewBox="0 0 44 44" className="size-11" fill="none" stroke="#b4b4b4">
      <circle cx={17.500} cy={17} r={14.300} strokeWidth={5.4} />
      <path d="M10.500 16.500H25" strokeWidth={4.6} strokeLinecap="butt" />
      <path d="M28.500 29L39 39" strokeWidth={6} strokeLinecap="round" />
    </svg>
  </button>
);

const App: React.FC = () => {
  return (
    <div className="relative h-[1074px] w-[1200px] overflow-hidden bg-[#08080a] font-['Inter',sans-serif]">
      <div className="pl-[45px] pr-[47px] pt-[35px]">
        <div className="h-[822px] rounded-[28px] border-[3px] border-[#17171a]">
          <Legend />
        </div>
        <div className="h-0">
          <div className="pt-[48px]">
            <div className="h-[3px] bg-[#141417]" />
          </div>
        </div>
        <StadiumMap />
        <ZoomOutButton />
        <div className="ml-[15px] mt-[17px] flex items-center text-[#a4a2ae]">
          <svg viewBox="0 0 66 66" className="size-[66px]" fill="none" stroke="currentColor" strokeWidth={4} strokeLinecap="round" strokeLinejoin="round">
            <path d="M10 24C10 11 20 4 33 4S56 11 56 24" />
            <rect x={4.500} y={24.500} width={9} height={21} rx={4} />
            <rect x={52} y={24.500} width={9} height={21} rx={4} />
            <path d="M56.500 46C56 55 49 60.500 40 60.500H32.500V55.500" />
          </svg>
          <a className="ml-[27px] mt-0.5 text-[45px] font-semibold leading-[52px] tracking-[1.57px] underline decoration-[3px] underline-offset-[4px]">Contact us for help</a>
        </div>
      </div>
    </div>
  );
};

export default App;
